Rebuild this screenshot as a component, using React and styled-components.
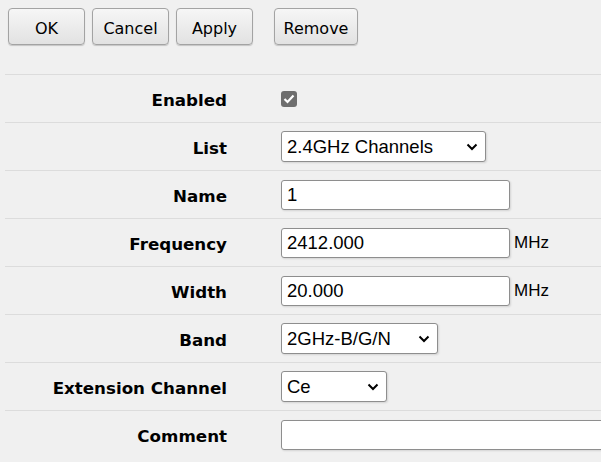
import React from 'react';
import styled, { createGlobalStyle } from 'styled-components';

const GlobalStyle = createGlobalStyle`
  html, body {
    margin: 0;
    padding: 0;
    background: #f0f0f0;
    overflow: hidden;
  }
`;

const Page = styled.div`
  width: 601px;
  height: 462px;
  background: #f0f0f0;
  overflow: hidden;
  padding: 8px 0 0 0;
  box-sizing: border-box;
`;

const Toolbar = styled.div`
  display: flex;
  align-items: center;
  gap: 7px;
  padding-left: 8px;
  height: 37px;
  margin-bottom: 29px;
`;

const Button = styled.button`
  font-family: 'DejaVu Sans', Verdana, sans-serif;
  font-size: 16px;
  color: #000;
  height: 37px;
  width: ${props => props.w}px;
  margin-left: ${props => props.gapLeft || 0}px;
  padding: 3px 0 0 0;
  border: 1px solid #a3a3a3;
  border-radius: 4px;
  background: linear-gradient(#f6f6f6, #e2e2e2);
  box-shadow: 0 1px 1px rgba(0, 0, 0, 0.18);
  cursor: pointer;
`;

const Form = styled.div`
  margin-left: 5px;
`;

const Row = styled.div`
  display: grid;
  grid-template-columns: 222px 1fr;
  column-gap: 54px;
  align-items: center;
  height: 47px;
  border-top: 1px solid #dcdcdc;
`;

const Label = styled.div`
  font-family: 'DejaVu Sans', Verdana, sans-serif;
  font-weight: bold;
  font-size: 16.7px;
  color: #000;
  text-align: right;
  white-space: nowrap;
  padding-top: 3px;
`;

const Field = styled.div`
  display: flex;
  align-items: center;
  gap: 4px;
  white-space: nowrap;
`;

const Input = styled.div`
  box-sizing: border-box;
  width: ${props => props.w}px;
  height: 30px;
  background: #fff;
  border: 1px solid #8e8e8e;
  border-radius: 3px;
  box-shadow: 1px 1px 2px rgba(0, 0, 0, 0.12);
  font-family: 'Liberation Sans', Arial, sans-serif;
  font-size: 18.5px;
  line-height: 28px;
  padding-left: 5px;
  color: #000;
  flex-shrink: 0;
`;

const Select = styled(Input)`
  display: flex;
  align-items: center;
  justify-content: space-between;
  padding-right: 7px;
  height: 31px;
`;

const Unit = styled.span`
  font-family: 'Liberation Sans', Arial, sans-serif;
  font-size: 17px;
  color: #000;
`;

const Check = styled.div`
  width: 16px;
  height: 16px;
  border-radius: 3px;
  background: #6e6e6e;
  display: flex;
  align-items: center;
  justify-content: center;
  margin-top: 0;
`;

const Chevron = () => (
  <svg width="12" height="8" viewBox="0 0 12 8">
    <path d="M1.5 1.5 L6 6 L10.5 1.5" fill="none" stroke="#000" strokeWidth="2" />
  </svg>
);

const rows = [
  { label: 'Enabled', kind: 'check' },
  { label: 'List', kind: 'select', value: '2.4GHz Channels', w: 205 },
  { label: 'Name', kind: 'input', value: '1', w: 229 },
  { label: 'Frequency', kind: 'input', value: '2412.000', w: 229, unit: 'MHz' },
  { label: 'Width', kind: 'input', value: '20.000', w: 229, unit: 'MHz' },
  { label: 'Band', kind: 'select', value: '2GHz-B/G/N', w: 157 },
  { label: 'Extension Channel', kind: 'select', value: 'Ce', w: 106 },
  { label: 'Comment', kind: 'input', value: '', w: 340 },
];

const App = () => {
  return (
    <Page>
      <GlobalStyle />
      <Toolbar>
        <Button w={77}>OK</Button>
        <Button w={77}>Cancel</Button>
        <Button w={77}>Apply</Button>
        <Button w={84} gapLeft={14}>Remove</Button>
      </Toolbar>
      <Form>
        {rows.map(r => (
          <Row key={r.label}>
            <Label>{r.label}</Label>
            <Field>
              {r.kind === 'check' && (
                <Check>
                  <svg width="12" height="10" viewBox="0 0 12 10">
                    <path d="M1.5 5 L4.5 8 L10.5 1.5" fill="none" stroke="#fff" strokeWidth="2.2" />
                  </svg>
                </Check>
              )}
              {r.kind === 'select' && (
                <Select w={r.w}>
                  <span>{r.value}</span>
                  <Chevron />
                </Select>
              )}
              {r.kind === 'input' && <Input w={r.w}>{r.value}</Input>}
              {r.unit && <Unit>{r.unit}</Unit>}
            </Field>
          </Row>
        ))}
      </Form>
    </Page>
  );
};

export default App;
